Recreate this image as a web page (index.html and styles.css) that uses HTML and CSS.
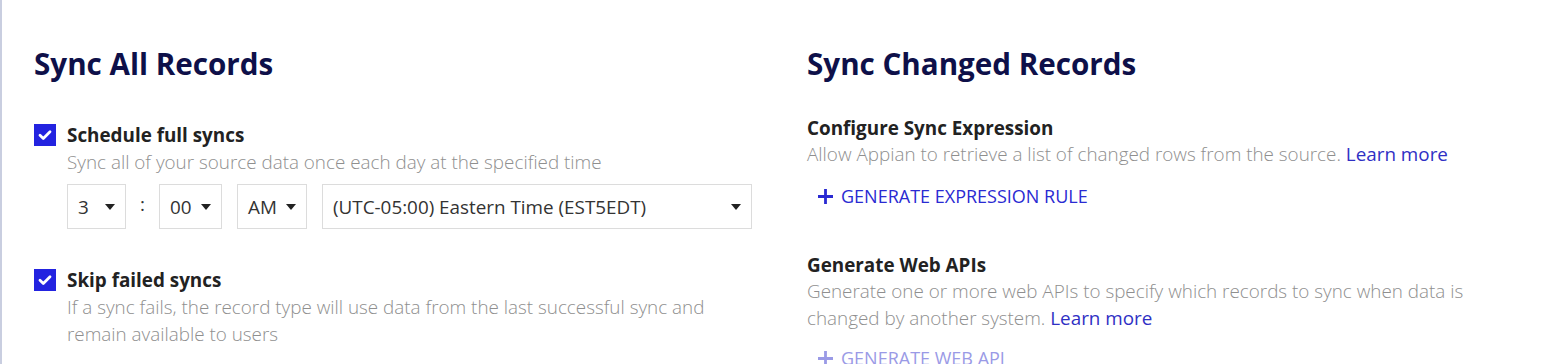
FILE: index.html
```html
<!DOCTYPE html>
<html lang="en">
<head>
    <meta charset="UTF-8">
    <meta name="viewport" content="width=device-width, initial-scale=1.0">
    <title>Sync Settings</title>
    <link rel="stylesheet" href="styles.css">
</head>
<body>
    <div class="page">
        <div class="col">
            <h2 class="heading">Sync All Records</h2>

            <div class="option first">
                <div class="option-row">
                    <span class="check">
                        <svg viewBox="0 0 22 22" width="22" height="22"><path d="M6 11.2l3.3 3.2L16 7.8" fill="none" stroke="#fff" stroke-width="2.8" stroke-linecap="round" stroke-linejoin="round"/></svg>
                    </span>
                    <span class="label">Schedule full syncs</span>
                </div>
                <div class="desc">Sync all of your source data once each day at the specified time</div>
                <div class="time-row">
                    <div class="select hour">3<span class="caret"></span></div>
                    <div class="colon">:</div>
                    <div class="select minute">00<span class="caret"></span></div>
                    <div class="select ampm">AM<span class="caret"></span></div>
                    <div class="select zone">(UTC-05:00) Eastern Time (EST5EDT)<span class="caret"></span></div>
                </div>
            </div>

            <div class="option second">
                <div class="option-row">
                    <span class="check">
                        <svg viewBox="0 0 22 22" width="22" height="22"><path d="M6 11.2l3.3 3.2L16 7.8" fill="none" stroke="#fff" stroke-width="2.8" stroke-linecap="round" stroke-linejoin="round"/></svg>
                    </span>
                    <span class="label">Skip failed syncs</span>
                </div>
                <div class="desc">If a sync fails, the record type will use data from the last successful sync and remain available to users</div>
            </div>
        </div>

        <div class="col">
            <h2 class="heading">Sync Changed Records</h2>

            <div class="block first">
                <div class="label">Configure Sync Expression</div>
                <div class="desc">Allow Appian to retrieve a list of changed rows from the source. <a class="link" href="#">Learn more</a></div>
                <a class="action" href="#">
                    <svg viewBox="0 0 16 16" width="15" height="15"><path d="M8 0v16M0 8h16" stroke="currentColor" stroke-width="3"/></svg>
                    Generate Expression Rule
                </a>
            </div>

            <div class="block second">
                <div class="label">Generate Web APIs</div>
                <div class="desc">Generate one or more web APIs to specify which records to sync when data is changed by another system. <a class="link" href="#">Learn more</a></div>
                <a class="action disabled" href="#">
                    <svg viewBox="0 0 16 16" width="15" height="15"><path d="M8 0v16M0 8h16" stroke="currentColor" stroke-width="3"/></svg>
                    Generate Web API
                </a>
            </div>
        </div>
    </div>
</body>
</html>
```

FILE: styles.css
```css
body {
    margin: 0;
    background: #fff;
    font-family: "Open Sans", "Liberation Sans", sans-serif;
    color: #222;
}
.page {
    height: 364px;
    overflow: hidden;
    box-sizing: border-box;
    border-left: 2px solid #c9cee0;
    padding: 46px 0 0 32px;
    display: grid;
    grid-template-columns: 726px 726px;
    column-gap: 47px;
}
.heading {
    margin: 0;
    font-size: 29.6px;
    line-height: 36px;
    font-weight: 700;
    color: #0e1049;
}
.option-row {
    display: flex;
    align-items: center;
    gap: 11px;
}
.check {
    width: 22px;
    height: 22px;
    background: #2323e0;
    display: flex;
}
.label {
    font-size: 18.85px;
    line-height: 24px;
    font-weight: 700;
    color: #222;
}
.desc {
    font-size: 18.85px;
    line-height: 27px;
    font-weight: 300;
    color: #8f8f8f;
}
.option .desc {
    padding-left: 33px;
    margin-top: 2px;
}
.option.first {
    margin-top: 41px;
}
.option.second {
    margin-top: 39px;
}
.time-row {
    display: flex;
    align-items: center;
    margin: 8px 0 0 33px;
}
.select {
    height: 45px;
    box-sizing: border-box;
    border: 1px solid #dcdcdc;
    display: flex;
    align-items: center;
    justify-content: space-between;
    padding: 0 10px 0 10px;
    font-size: 18.85px;
    color: #333;
}
.caret {
    width: 0;
    height: 0;
    border-left: 5.5px solid transparent;
    border-right: 5.5px solid transparent;
    border-top: 6px solid #222;
}
.hour { width: 59px; }
.minute { width: 63px; }
.ampm { width: 70px; margin-left: 15px; }
.zone { width: 430px; margin-left: 15px; }
.colon {
    width: 33px;
    text-align: center;
    font-size: 18.85px;
    color: #333;
    margin-top: -6px;
}
.block.first {
    margin-top: 34px;
}
.block.second {
    margin-top: 45px;
}
.block .desc {
    margin-top: 1px;
}
.link {
    color: #2f2fc4;
    font-weight: 400;
    text-decoration: none;
}
.action {
    display: flex;
    align-items: center;
    gap: 8px;
    margin: 16px 0 0 11px;
    font-size: 18px;
    line-height: 24px;
    text-transform: uppercase;
    color: #2a2ad2;
    text-decoration: none;
}
.block.second .action {
    margin-top: 14px;
}
.action.disabled {
    color: #9a9ae6;
}
```
